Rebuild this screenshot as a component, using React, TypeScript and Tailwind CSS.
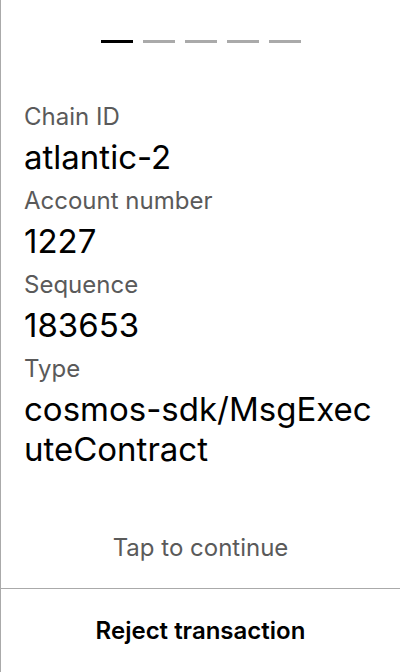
import React from "react";

const items = [
  { label: "Chain ID", value: "atlantic-2" },
  { label: "Account number", value: "1227" },
  { label: "Sequence", value: "183653" },
  { label: "Type", value: "cosmos-sdk/MsgExecuteContract" },
];

export default function App() {
  return (
    <div
      className="w-[400px] h-[672px] bg-white border-l border-[#aaaaaa] flex flex-col"
      style={{ fontFamily: "Inter, 'Noto Sans', sans-serif" }}
    >
      <div className="flex-1 flex flex-col">
        <div className="flex justify-center gap-[10px] pt-[40px]">
          <div className="w-[32px] h-[3px] bg-black" />
          <div className="w-[32px] h-[3px] bg-[#aaaaaa]" />
          <div className="w-[32px] h-[3px] bg-[#aaaaaa]" />
          <div className="w-[32px] h-[3px] bg-[#aaaaaa]" />
          <div className="w-[32px] h-[3px] bg-[#aaaaaa]" />
        </div>
        <div className="flex flex-col pl-[23px] pr-[24px] pt-[58px]">
          {items.map((it) => (
            <div key={it.label} className="flex flex-col">
              <div className="text-[24px] leading-[32px] text-[#5a5a5a]">{it.label}</div>
              <div className="text-[33px] leading-[40px] text-black break-all mt-[4px] mb-[8px]">
                {it.value}
              </div>
            </div>
          ))}
        </div>
        <div className="mt-auto pb-[24px] text-center text-[24px] leading-[32px] text-[#5a5a5a]">
          Tap to continue
        </div>
      </div>
      <div className="h-[84px] border-t border-[#aaaaaa] flex items-center justify-center text-[24px] font-semibold text-black">
        Reject transaction
      </div>
    </div>
  );
}
